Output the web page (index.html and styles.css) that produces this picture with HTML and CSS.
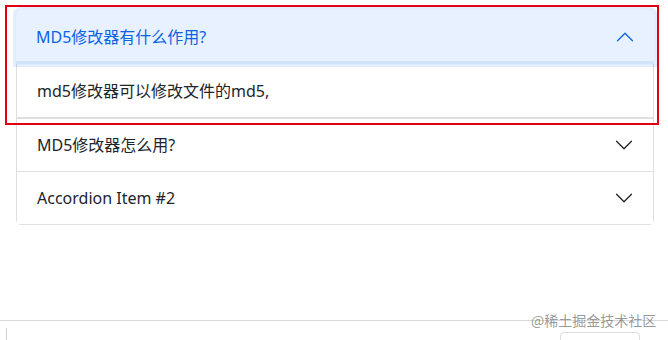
FILE: index.html
```html
<!DOCTYPE html>
<html lang="zh-CN">
<head>
<meta charset="utf-8">
<link rel="stylesheet" href="styles.css">
</head>
<body>
<div class="page">
  <main class="content">
    <div class="accordion">
      <div class="item">
        <button class="header active">
          <span>MD5修改器有什么作用?</span>
          <svg class="chev up" viewBox="0 0 16 16"><path fill="#0c63e4" d="M1.646 4.646a.5.5 0 0 1 .708 0L8 10.293l5.646-5.647a.5.5 0 0 1 .708.708l-6 6a.5.5 0 0 1-.708 0l-6-6a.5.5 0 0 1 0-.708z"/></svg>
        </button>
        <div class="body">md5修改器可以修改文件的md5,</div>
      </div>
      <div class="item">
        <button class="header">
          <span>MD5修改器怎么用?</span>
          <svg class="chev" viewBox="0 0 16 16"><path fill="#212529" d="M1.646 4.646a.5.5 0 0 1 .708 0L8 10.293l5.646-5.647a.5.5 0 0 1 .708.708l-6 6a.5.5 0 0 1-.708 0l-6-6a.5.5 0 0 1 0-.708z"/></svg>
        </button>
      </div>
      <div class="item">
        <button class="header">
          <span>Accordion Item #2</span>
          <svg class="chev" viewBox="0 0 16 16"><path fill="#212529" d="M1.646 4.646a.5.5 0 0 1 .708 0L8 10.293l5.646-5.647a.5.5 0 0 1 .708.708l-6 6a.5.5 0 0 1-.708 0l-6-6a.5.5 0 0 1 0-.708z"/></svg>
        </button>
      </div>
    </div>
    <div class="highlight"></div>
  </main>
  <footer class="footer">
    <div class="bar"></div>
    <div class="box"></div>
    <div class="watermark">@稀土掘金技术社区</div>
  </footer>
</div>
</body>
</html>
```
FILE: styles.css
```css
html, body {
  margin: 0;
  padding: 0;
  background: #fff;
}
body {
  font-family: "Noto Sans", "Noto Sans CJK SC", sans-serif;
  color: #212529;
  width: 668px;
  height: 340px;
  overflow: hidden;
}
.page {
  display: flex;
  flex-direction: column;
  height: 340px;
}
.content {
  position: relative;
  height: 320px;
  padding: 10px 14px 0 16px;
  box-sizing: border-box;
}
.accordion {
  border: 1px solid #dfdfdf;
  border-radius: 5px;
  width: 638px;
  box-sizing: border-box;
}
.item + .item {
  border-top: 1px solid #dfdfdf;
}
.header {
  display: flex;
  align-items: center;
  justify-content: space-between;
  width: 100%;
  height: 52px;
  padding: 0 19px 0 20px;
  border: 0;
  background: #fff;
  font-family: inherit;
  font-size: 16px;
  color: #212529;
  text-align: left;
  box-sizing: border-box;
  line-height: 24px;
}
.header.active {
  height: 54px;
  margin: -1px -1px 0 -1px;
  width: calc(100% + 2px);
  background: #e7f1ff;
  color: #0c63e4;
  border-radius: 5px 5px 0 0;
  box-shadow: 0 0 0 3px rgba(13, 110, 253, 0.12), inset 0 -3px 0 #d2e3fa;
}
.chev {
  width: 20px;
  height: 20px;
  flex: none;
}
.chev.up {
  transform: rotate(180deg);
}
.body {
  padding: 15px 20px 14px 20px;
  font-size: 16px;
  line-height: 24px;
  border-bottom: 1px solid #dfdfdf;
  margin-bottom: 0;
}
.body + * {
  display: none;
}
.highlight {
  position: absolute;
  left: 5px;
  top: 5px;
  width: 654px;
  height: 120px;
  border: 2px solid #e3000f;
  box-sizing: border-box;
  pointer-events: none;
}
.footer {
  position: relative;
  flex: 1;
  border-top: 1px solid #d9d9d9;
}
.bar {
  position: absolute;
  left: 6px;
  top: 7px;
  width: 1px;
  height: 14px;
  background: #cfcfcf;
}
.box {
  position: absolute;
  left: 560px;
  top: 11px;
  width: 78px;
  height: 20px;
  border: 1px solid #dcdcdc;
  border-radius: 4px;
}
.watermark {
  position: absolute;
  left: 531px;
  top: -11px;
  font-family: "Noto Sans CJK SC", sans-serif;
  font-size: 14px;
  line-height: 20px;
  color: rgba(120, 120, 120, 0.75);
  letter-spacing: 0;
}
```
